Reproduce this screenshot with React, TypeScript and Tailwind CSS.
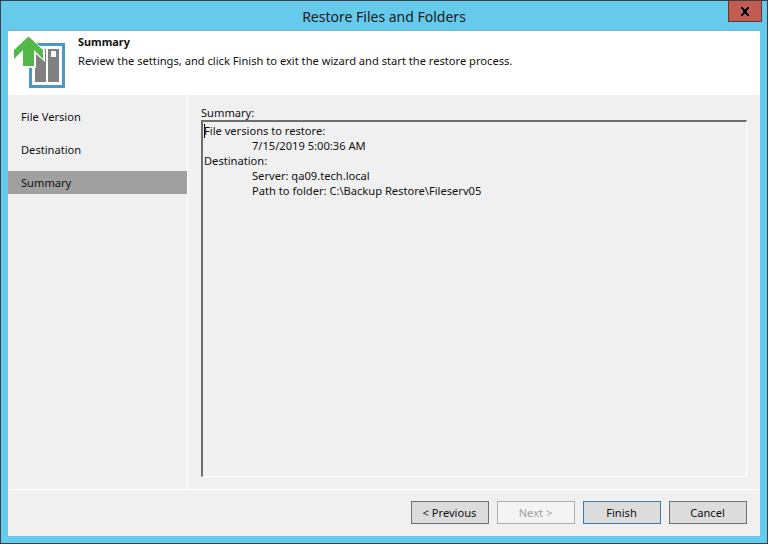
export default function App() {
  const font = { fontFamily: '"Noto Sans", sans-serif' };
  return (
    <div className="w-[768px] h-[544px] overflow-hidden flex flex-col bg-[#65caeb] border border-[#3b4147] text-[11.13px] text-[#111]" style={font}>
      <div className="h-[29px] shrink-0 relative flex items-center justify-center text-[14px] text-[#1a1a1a] pt-[1px]">
        Restore Files and Folders
        <div className="absolute top-0 right-[5px] w-[34px] h-[21px] bg-[#c25b50] border border-t-0 border-[#5d3a38] flex items-center justify-center">
          <svg width="10" height="9" viewBox="0 0 10 9"><path d="M1 0h2v1h1v1h2V1h1V0h2v2H8v1H7v3h1v1h1v2H7V8H6V7H4v1H3v1H1V7h1V6h1V3H2V2H1z" fill="#000" /></svg>
        </div>
      </div>
      <div className="flex-1 flex flex-col mx-[7px] mb-[7px] bg-[#f0f0f0] border-t border-[#7fb0c6]">
        <div className="h-[64px] shrink-0 bg-white flex">
          <div className="w-[70px] shrink-0 pl-[6px] pt-[4px]">
            <svg width="54" height="54" viewBox="0 0 54 54">
              <rect x="16.5" y="9.5" width="33" height="42" fill="#fff" stroke="#4b97c8" strokeWidth="3" />
              <rect x="21" y="14" width="11" height="33" fill="#808080" />
              <rect x="34" y="14" width="11" height="33" fill="#808080" />
              <rect x="37" y="16" width="5" height="6" fill="#fff" />
              <path d="M14.5 2L31 15V27L22 19V33H9V24H0V15Z" fill="#fff" />
              <path d="M14.5 1.5L29 15V24L20 15V31H9V15L0 24V15Z" fill="#54b948" />
            </svg>
          </div>
          <div className="flex flex-col">
            <div className="font-bold text-[10.9px] leading-[14px] mt-[4px]">Summary</div>
            <div className="mt-[4px] leading-[16px]">Review the settings, and click Finish to exit the wizard and start the restore process.</div>
          </div>
        </div>
        <div className="flex-1 flex min-h-0 border-b border-white">
          <div className="w-[180px] shrink-0 border-r border-white pt-[5px]">
            <div className="h-[33px] pl-[13px] pt-[1px] flex items-center">File Version</div>
            <div className="h-[33px] pl-[13px] pt-[1px] flex items-center">Destination</div>
            <div className="h-[23px] mt-[5px] pl-[13px] pt-[1px] flex items-center bg-[#a0a0a0]">Summary</div>
          </div>
          <div className="flex-1 flex flex-col pl-[13px] pr-[13px] pt-[10px] pb-[12px]">
            <div className="leading-[16px] h-[15px]">Summary:</div>
            <div className="flex-1 border-[#6e6e6e] border-t-2 border-l-2 border-r border-b border-r-white border-b-white pl-[1px] pt-[1px] leading-[15px]">
              <div className="flex items-center"><span className="w-px h-[14px] bg-black shrink-0 -mr-px" />File versions to restore:</div>
              <div className="pl-[48px]">7/15/2019 5:00:36 AM</div>
              <div>Destination:</div>
              <div className="pl-[48px]">Server: qa09.tech.local</div>
              <div className="pl-[48px]">Path to folder: C:\Backup Restore\Fileserv05</div>
            </div>
          </div>
        </div>
        <div className="h-[46px] shrink-0 flex items-center justify-end gap-[8px] pr-[13px] pb-[1px]">
          <div className="w-[78px] h-[23px] pt-[1px] pr-[1px] flex items-center justify-center bg-[#dcdcdc] border border-[#707070]">&lt; Previous</div>
          <div className="w-[78px] h-[23px] pt-[1px] pr-[1px] flex items-center justify-center bg-[#f4f4f4] border border-[#adadad] text-[#a0a0a0]">Next &gt;</div>
          <div className="w-[78px] h-[23px] pt-[1px] pr-[1px] flex items-center justify-center bg-[#dcdcdc] border border-[#3f7caa]">Finish</div>
          <div className="w-[78px] h-[23px] pt-[1px] pr-[1px] flex items-center justify-center bg-[#dcdcdc] border border-[#707070]">Cancel</div>
        </div>
      </div>
    </div>
  );
}
